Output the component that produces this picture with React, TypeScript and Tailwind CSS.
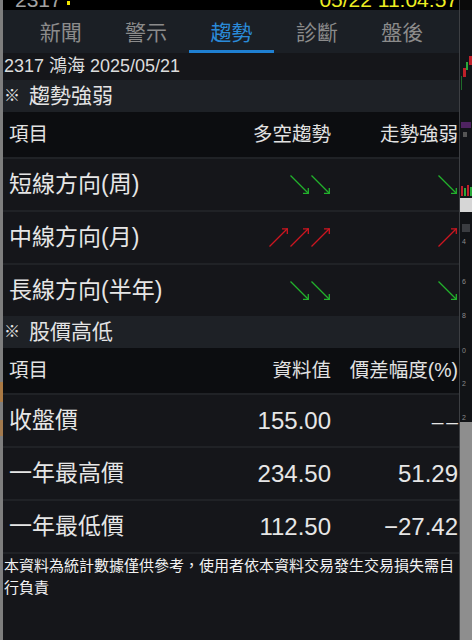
import React from 'react';

const GREEN = '#22b12c';
const RED = '#cc1620';

function Arrow({ up }: { up?: boolean }) {
  const color = up ? RED : GREEN;
  return (
    <svg width="21" height="20" viewBox="0 0 21 20" fill="none" stroke={color} strokeWidth="1.3">
      {up ? (
        <>
          <line x1="1.5" y1="18.5" x2="19.5" y2="0.5" />
          <polyline points="14,0.8 19.3,0.8 19.3,6" />
        </>
      ) : (
        <>
          <line x1="1.5" y1="0.5" x2="19.5" y2="18.5" />
          <polyline points="14,18.3 19.3,18.3 19.3,13" />
        </>
      )}
    </svg>
  );
}

function Arrows({ n, up }: { n: number; up?: boolean }) {
  return (
    <div className="flex justify-end">
      {Array.from({ length: n }).map((_, i) => (
        <Arrow key={i} up={up} />
      ))}
    </div>
  );
}

const tabs = ['新聞', '警示', '趨勢', '診斷', '盤後'];

const trendRows = [
  { label: '短線方向(周)', n: 2, up: false },
  { label: '中線方向(月)', n: 3, up: true },
  { label: '長線方向(半年)', n: 2, up: false },
];

const priceRows = [
  { label: '收盤價', value: '155.00', diff: '' },
  { label: '一年最高價', value: '234.50', diff: '51.29' },
  { label: '一年最低價', value: '112.50', diff: '−27.42' },
];

function SectionTitle({ title }: { title: string }) {
  return (
    <div className="h-[32px] bg-[#1e2126] flex items-center pl-[1px] text-[21px] text-[#e4e4e4]">
      <span className="text-[16px] mr-[9px]">※</span>
      {title}
    </div>
  );
}

function HeaderRow({ a, b }: { a: string; b: string }) {
  return (
    <div className="h-[45px] bg-[#0c0d10] grid grid-cols-[1fr_131px_127px] items-center pl-[6px] pr-[1px] text-[19.5px] text-[#e2e2e2]">
      <div>項目</div>
      <div className="text-right whitespace-nowrap">{a}</div>
      <div className="text-right whitespace-nowrap">{b}</div>
    </div>
  );
}

export default function App() {
  return (
    <div className="w-[472px] h-[640px] flex bg-black overflow-hidden font-['Liberation_Sans','Noto_Sans_CJK_TC',sans-serif]">
      {/* left edge of the app behind */}
      <div className="w-[3px] h-full bg-[#7e7e7e] flex flex-col">
        <div className="h-[382px]" />
        <div className="h-[20px] bg-[#c8761e] opacity-60" />
        <div className="h-[18px]" />
        <div className="h-[16px] bg-[#c8761e] opacity-50" />
      </div>

      <div className="w-[457px] h-full flex flex-col bg-[#15161a] border-r border-[#3d3f43]">
        {/* status line, cut off at the top */}
        <div className="h-[10px] bg-black overflow-hidden flex items-start justify-between pl-[12px] pr-[1px]">
          <div className="flex items-start -mt-[11px] text-[21px] leading-[22px] text-[#a3a3a3]">
            2317
            <span className="ml-[5px] mt-[12px] w-[3px] h-[4px] bg-[#f0e400]" />
          </div>
          <div className="-mt-[11px] text-[21px] leading-[22px] text-[#eeee22]">05/22 11:04:57</div>
        </div>

        {/* tabs */}
        <div className="h-[43px] bg-[#1b1f25] pl-[15px]">
          <div className="w-[427px] h-full grid grid-cols-5">
            {tabs.map((t) => (
              <div
                key={t}
                className={
                  t === '趨勢'
                    ? 'h-full flex items-center justify-center pt-[6px] border-b-[3px] border-[#1f80d2] text-[21px] text-[#2a8ad8]'
                    : 'h-full flex items-center justify-center pt-[6px] border-b-[3px] border-transparent text-[21px] text-[#8b8b8b]'
                }
              >
                {t}
              </div>
            ))}
          </div>
        </div>

        <div className="h-[27px] flex items-center pl-[1px] text-[18px] text-[#dcdcdc]">2317 鴻海 2025/05/21</div>

        <SectionTitle title="趨勢強弱" />
        <HeaderRow a="多空趨勢" b="走勢強弱" />
        {trendRows.map((r) => (
          <div
            key={r.label}
            className="h-[53px] border-t-2 border-[#202226] grid grid-cols-[1fr_131px_127px] items-center pl-[6px] pr-[1px] text-[23px] text-[#e6e6e6]"
          >
            <div className="whitespace-nowrap">{r.label}</div>
            <Arrows n={r.n} up={r.up} />
            <Arrows n={1} up={r.up} />
          </div>
        ))}

        <SectionTitle title="股價高低" />
        <HeaderRow a="資料值" b="價差幅度(%)" />
        {priceRows.map((r) => (
          <div
            key={r.label}
            className="h-[53px] border-t-2 border-[#202226] grid grid-cols-[1fr_131px_127px] items-center pl-[6px] pr-[1px] text-[#e6e6e6]"
          >
            <div className="text-[23px] whitespace-nowrap">{r.label}</div>
            <div className="text-[24px] text-right">{r.value}</div>
            {r.diff ? (
              <div className="text-[24px] text-right">{r.diff}</div>
            ) : (
              <div className="flex justify-end gap-[3px] text-[21px] pt-[2px]">
                <span>–</span>
                <span>–</span>
              </div>
            )}
          </div>
        ))}

        <div className="flex-1 border-t-2 border-[#202226] pl-[1px] pt-[1px] text-[15px] leading-[22px] text-[#f2f2f2]">
          本資料為統計數據僅供參考，使用者依本資料交易發生交易損失需自行負責
        </div>
      </div>

      {/* right edge of the chart behind */}
      <div className="w-[12px] h-full flex flex-col">
        <div className="h-[10px] bg-[#0a0a0a]" />
        <div className="h-[188px] bg-[#121418]">
          <svg width="12" height="188" viewBox="0 0 12 188">
            <rect x="1" y="66" width="1" height="14" fill="#1f6b2a" />
            <rect x="3" y="58" width="3" height="9" fill="#c0202a" />
            <rect x="6" y="52" width="2" height="8" fill="#2aa83a" />
            <rect x="9" y="46" width="3" height="9" fill="#c0202a" />
            <rect x="1" y="112" width="10" height="6" fill="#6a2a80" opacity="0.7" />
            <rect x="3" y="122" width="4" height="5" fill="#555" />
            <rect x="1" y="176" width="2" height="10" fill="#c0202a" />
            <rect x="4" y="178" width="2" height="8" fill="#2aa83a" />
            <rect x="7" y="175" width="2" height="11" fill="#c0202a" />
            <rect x="10" y="177" width="2" height="9" fill="#2aa83a" />
          </svg>
        </div>
        <div className="h-[14px] bg-[#d6d6d6]" />
        <div className="h-[210px] bg-[#111316] flex flex-col items-start pl-[2px] text-[7px] leading-[8px] text-[#8a8a8a]">
          <div className="mt-[12px] w-[8px] h-[12px] bg-[#3a3c40]" />
          <div className="mt-[6px]">4</div>
          <div className="mt-[32px]">6</div>
          <div className="mt-[26px]">8</div>
          <div className="mt-[27px]">0</div>
          <div className="mt-[25px]">2</div>
          <div className="mt-[26px]">2</div>
        </div>
        <div className="flex-1 bg-[#8e8e8e]" />
      </div>
    </div>
  );
}
